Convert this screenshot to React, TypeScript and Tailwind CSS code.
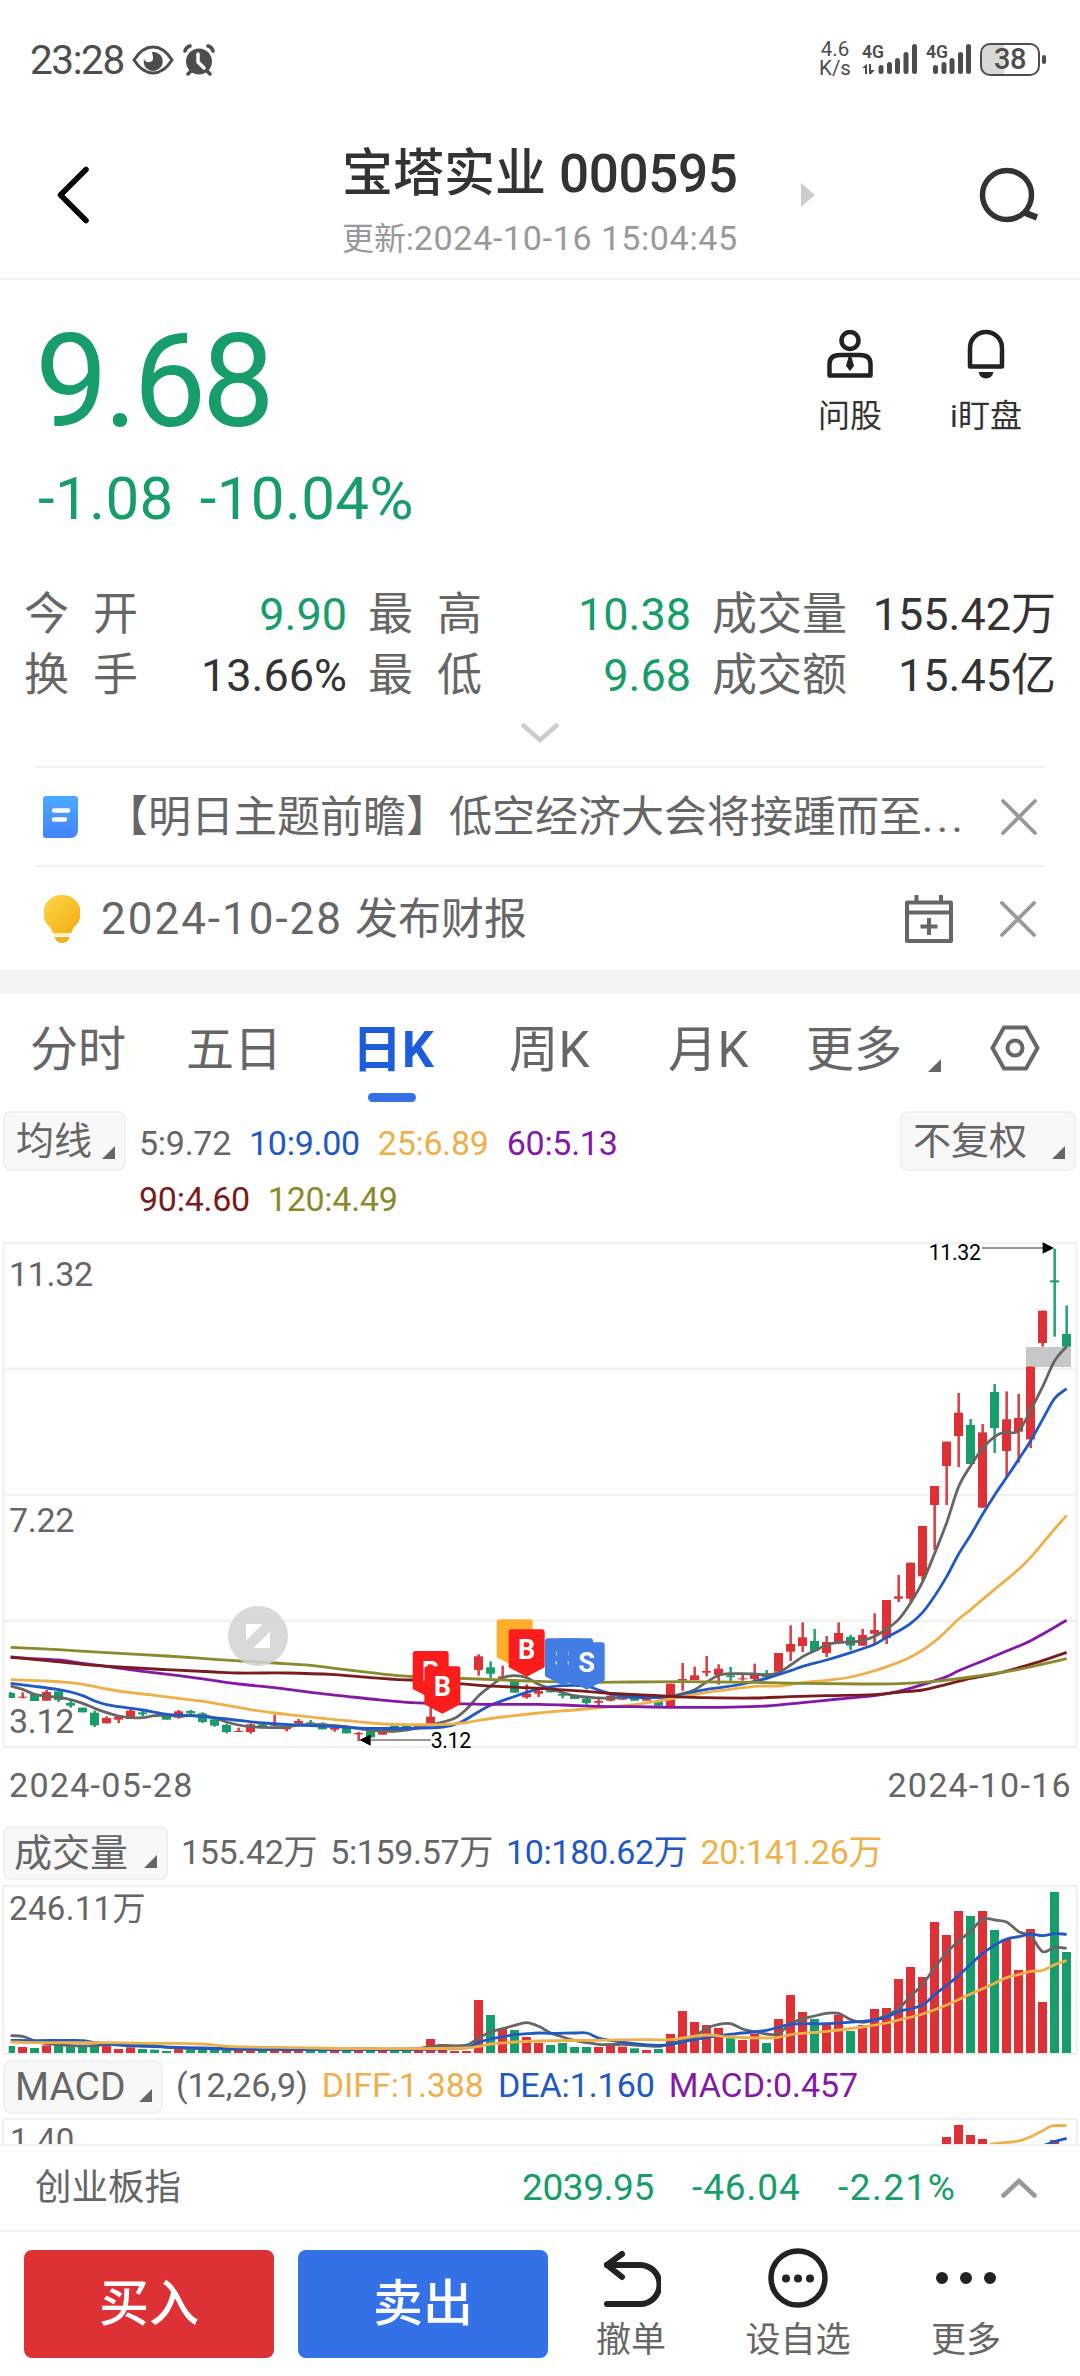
import type { ReactNode } from 'react';

const RED = '#dd3135';
const GREEN = '#169d6a';
const GRAY = '#666666';
const BLUE = '#2058c4';
const ORANGE = '#eeb04a';
const PURPLE = '#8419a8';
const MAROON = '#7a1c1c';
const OLIVE = '#888a2c';

type Point = [number, number];
/* direction, body top, body bottom, wick top, wick bottom */
type Candle = ['u' | 'd', number, number, number, number];

/* Chart drawings use a grid of three units per pixel. */
const centerX = (i: number) => 32 + 36 * i;

const candles: Candle[] = [
  ['d', 1389, 1404, 1386, 1404], ['u', 1400, 1403, 1387, 1405], ['d', 1393, 1413, 1393, 1413], ['u', 1386, 1412, 1380, 1412],
  ['d', 1384, 1410, 1384, 1416], ['d', 1419, 1427, 1412, 1433], ['d', 1433, 1447, 1433, 1447], ['d', 1448, 1486, 1442, 1491],
  ['u', 1464, 1480, 1459, 1480], ['u', 1460, 1469, 1460, 1479], ['u', 1442, 1467, 1438, 1467], ['d', 1447, 1453, 1442, 1458],
  ['u', 1456, 1459, 1456, 1459], ['d', 1458, 1469, 1458, 1469], ['u', 1444, 1463, 1440, 1466], ['d', 1443, 1450, 1440, 1453],
  ['d', 1450, 1476, 1447, 1479], ['d', 1468, 1487, 1466, 1490], ['d', 1485, 1506, 1481, 1510], ['u', 1503, 1506, 1493, 1506],
  ['u', 1483, 1506, 1480, 1511], ['d', 1483, 1488, 1478, 1490], ['u', 1480, 1487, 1454, 1490], ['u', 1493, 1498, 1490, 1504],
  ['u', 1473, 1480, 1467, 1482], ['d', 1477, 1481, 1470, 1484], ['d', 1480, 1498, 1477, 1498], ['u', 1494, 1499, 1490, 1505],
  ['d', 1493, 1510, 1493, 1510], ['u', 1509, 1513, 1506, 1533], ['d', 1502, 1522, 1500, 1524], ['u', 1503, 1514, 1503, 1514],
  ['d', 1487, 1493, 1483, 1493], ['d', 1485, 1493, 1482, 1493], ['u', 1486, 1493, 1486, 1493], ['u', 1460, 1480, 1430, 1480],
  ['u', 1400, 1430, 1400, 1440], ['u', 1360, 1390, 1360, 1390], ['u', 1343, 1347, 1343, 1347], ['u', 1279, 1320, 1273, 1337],
  ['d', 1312, 1331, 1294, 1344], ['u', 1339, 1345, 1307, 1345], ['d', 1353, 1388, 1353, 1388], ['u', 1391, 1402, 1363, 1406],
  ['u', 1383, 1391, 1370, 1401], ['d', 1381, 1387, 1381, 1387], ['d', 1392, 1397, 1387, 1405], ['d', 1394, 1407, 1394, 1407],
  ['d', 1406, 1419, 1400, 1424], ['u', 1413, 1418, 1408, 1426], ['u', 1397, 1412, 1393, 1414], ['u', 1403, 1409, 1403, 1409],
  ['d', 1404, 1412, 1404, 1412], ['u', 1405, 1412, 1405, 1412], ['d', 1415, 1427, 1415, 1427], ['u', 1361, 1430, 1361, 1430],
  ['u', 1347, 1351, 1299, 1382], ['u', 1336, 1350, 1310, 1350], ['u', 1323, 1328, 1278, 1339], ['u', 1316, 1335, 1303, 1364],
  ['d', 1336, 1341, 1311, 1353], ['u', 1345, 1348, 1330, 1352], ['u', 1331, 1347, 1301, 1350], ['d', 1330, 1342, 1320, 1345],
  ['u', 1269, 1325, 1269, 1325], ['u', 1242, 1265, 1186, 1293], ['u', 1222, 1248, 1177, 1266], ['d', 1233, 1263, 1197, 1263],
  ['u', 1236, 1269, 1218, 1281], ['u', 1209, 1240, 1177, 1242], ['d', 1221, 1247, 1214, 1261], ['u', 1215, 1247, 1197, 1247],
  ['u', 1200, 1211, 1150, 1245], ['u', 1110, 1224, 1110, 1242], ['u', 1099, 1106, 1035, 1116], ['u', 998, 1106, 998, 1115],
  ['u', 888, 1039, 888, 1052], ['u', 768, 825, 768, 960], ['u', 635, 708, 635, 825], ['u', 548, 618, 489, 711],
  ['d', 585, 702, 567, 702], ['u', 607, 833, 582, 833], ['d', 486, 594, 462, 669], ['u', 568, 663, 484, 741],
  ['u', 564, 605, 492, 698], ['u', 410, 628, 410, 654], ['u', 242, 339, 242, 350], ['d', 151, 157, 56, 320],
  ['d', 312, 350, 226, 350],
];

const ma5: Point[] = [
  [32, 1368], [68, 1378], [104, 1393], [140, 1398], [176, 1402], [212, 1409], [248, 1420], [284, 1435], [320, 1448], [356, 1458],
  [392, 1463], [428, 1463], [464, 1457], [500, 1455], [536, 1458], [572, 1457], [608, 1458], [644, 1464], [680, 1476], [716, 1485],
  [752, 1490], [788, 1492], [824, 1493], [860, 1491], [896, 1485], [950, 1484], [1040, 1490], [1112, 1501], [1184, 1504], [1220, 1500],
  [1256, 1493], [1292, 1484], [1328, 1476], [1364, 1465], [1400, 1437], [1436, 1397], [1472, 1368], [1508, 1343], [1544, 1337],
  [1580, 1343], [1616, 1363], [1652, 1377], [1688, 1388], [1724, 1398], [1760, 1401], [1796, 1404], [1832, 1404], [1868, 1403],
  [1904, 1401], [1976, 1402], [2012, 1399], [2048, 1391], [2084, 1379], [2120, 1356], [2160, 1335], [2210, 1331], [2264, 1332],
  [2300, 1335], [2336, 1328], [2372, 1305], [2408, 1280], [2444, 1262], [2480, 1245], [2516, 1237], [2552, 1236], [2588, 1232],
  [2624, 1219], [2660, 1197], [2696, 1168], [2732, 1118], [2768, 1055], [2804, 970], [2840, 878], [2876, 770], [2912, 707],
  [2948, 655], [2984, 620], [3012, 607], [3056, 603], [3092, 540], [3128, 470], [3164, 392], [3200, 349],
];
const ma10: Point[] = [
  [32, 1360], [104, 1369], [176, 1379], [212, 1386], [248, 1397], [284, 1413], [320, 1424], [356, 1430], [428, 1440], [500, 1453],
  [572, 1457], [680, 1467], [788, 1479], [896, 1485], [1004, 1490], [1112, 1495], [1220, 1495], [1328, 1491], [1380, 1478],
  [1436, 1445], [1472, 1426], [1508, 1412], [1580, 1387], [1616, 1377], [1652, 1371], [1688, 1367], [1760, 1368], [1796, 1380],
  [1832, 1392], [1868, 1398], [1940, 1403], [2012, 1400], [2048, 1396], [2084, 1385], [2120, 1378], [2160, 1373], [2228, 1362],
  [2300, 1345], [2372, 1322], [2408, 1309], [2480, 1290], [2552, 1268], [2624, 1243], [2660, 1222], [2696, 1203], [2732, 1180],
  [2768, 1147], [2804, 1098], [2840, 1040], [2876, 972], [2912, 915], [2948, 853], [2984, 795], [3020, 742], [3056, 688],
  [3092, 632], [3128, 568], [3164, 505], [3200, 476],
];
const ma25: Point[] = [
  [32, 1349], [140, 1353], [212, 1358], [250, 1363], [320, 1377], [392, 1388], [464, 1396], [536, 1405], [608, 1414], [680, 1426],
  [752, 1439], [824, 1449], [896, 1457], [968, 1465], [1040, 1472], [1112, 1479], [1180, 1483], [1300, 1484], [1380, 1480],
  [1436, 1471], [1508, 1461], [1616, 1449], [1724, 1440], [1832, 1430], [1904, 1424], [1976, 1413], [2048, 1400], [2120, 1387],
  [2160, 1382], [2264, 1369], [2336, 1368], [2408, 1358], [2480, 1351], [2552, 1341], [2624, 1322], [2696, 1297], [2732, 1281],
  [2768, 1260], [2804, 1234], [2840, 1202], [2876, 1167], [2912, 1139], [2948, 1108], [2984, 1078], [3020, 1048], [3056, 1018],
  [3092, 982], [3128, 940], [3164, 897], [3200, 856],
];
const ma60: Point[] = [
  [32, 1281], [100, 1286], [176, 1290], [248, 1300], [356, 1314], [428, 1324], [536, 1337], [644, 1352], [716, 1362], [824, 1373],
  [932, 1387], [1040, 1399], [1112, 1407], [1220, 1417], [1328, 1420], [1472, 1423], [1616, 1423], [1688, 1425], [1796, 1429],
  [1904, 1430], [2012, 1432], [2120, 1432], [2160, 1432], [2300, 1428], [2408, 1418], [2516, 1407], [2624, 1397], [2696, 1384],
  [2768, 1364], [2840, 1340], [2876, 1322], [2948, 1293], [3020, 1263], [3092, 1232], [3200, 1171],
];
const ma90: Point[] = [
  [32, 1282], [140, 1292], [248, 1303], [356, 1311], [500, 1319], [644, 1326], [716, 1329], [860, 1329], [1004, 1334], [1112, 1343],
  [1184, 1348], [1292, 1353], [1436, 1366], [1580, 1373], [1724, 1382], [1868, 1392], [2012, 1399], [2120, 1403], [2264, 1404],
  [2372, 1400], [2480, 1397], [2624, 1394], [2696, 1387], [2768, 1380], [2840, 1363], [2912, 1345], [2984, 1332], [3056, 1313],
  [3128, 1292], [3200, 1267],
];
const ma120: Point[] = [
  [32, 1252], [176, 1259], [320, 1268], [500, 1278], [644, 1288], [752, 1295], [824, 1299], [932, 1306], [1004, 1315], [1112, 1328],
  [1184, 1336], [1292, 1342], [1436, 1347], [1580, 1353], [1724, 1357], [1904, 1356], [2048, 1355], [2160, 1356], [2264, 1357],
  [2408, 1360], [2588, 1362], [2696, 1361], [2804, 1354], [2912, 1341], [3020, 1325], [3092, 1311], [3200, 1286],
];

/* Bar heights, in the same order as the candles. */
const volumes = [
  21, 18, 15, 23, 21, 21, 20, 21, 21, 12, 17, 12, 10, 6, 14, 12, 12, 11, 12, 10, 9, 9, 9, 9, 9, 6, 9, 8, 8, 8, 6, 10, 7, 7, 9, 42,
  27, 6, 6, 159, 114, 73, 69, 48, 30, 24, 30, 18, 18, 18, 29, 19, 14, 9, 12, 57, 126, 93, 84, 75, 45, 39, 58, 30, 102, 174, 123, 102,
  87, 115, 66, 84, 132, 135, 222, 258, 228, 393, 354, 426, 411, 426, 369, 342, 249, 372, 153, 483, 303,
];
const greenVolumes = new Set([0, 2, 4, 5, 6, 7, 11, 12, 13, 15, 16, 17, 18, 21, 25, 26, 28, 30, 32, 33, 40, 42, 45, 46, 47, 48, 52, 54, 60, 63, 67, 70, 80, 82, 87, 88]);

/* Index, height above the base line. */
const volumeMa5: Point[] = [
  [0, 52], [1, 50], [2, 36], [3, 28], [5, 22], [7, 22], [9, 28], [11, 27], [13, 17], [16, 13], [20, 11], [25, 10], [28, 12], [34, 13],
  [35, 20], [36, 22], [38, 24], [39, 45], [40, 63], [41, 73], [42, 83], [43, 91], [44, 80], [45, 60], [46, 48], [47, 38], [48, 31],
  [49, 26], [50, 25], [51, 26], [52, 24], [54, 20], [55, 28], [57, 50], [58, 74], [59, 86], [60, 88], [61, 72], [62, 64], [63, 57],
  [64, 58], [65, 88], [66, 103], [67, 111], [68, 119], [69, 119], [70, 100], [71, 92], [72, 99], [73, 114], [74, 133], [75, 171],
  [76, 206], [77, 256], [78, 301], [79, 336], [80, 365], [81, 402], [82, 399], [83, 393], [84, 364], [85, 351], [86, 304], [87, 317], [88, 314],
];
const volumeMa10: Point[] = [
  [0, 38], [2, 37], [5, 38], [6, 37], [7, 31], [9, 24], [12, 19], [16, 15], [20, 11], [28, 10], [34, 11], [38, 16], [39, 32], [40, 42],
  [41, 49], [42, 55], [43, 58], [44, 60], [45, 59], [47, 60], [48, 60], [49, 45], [50, 38], [52, 28], [54, 23], [55, 26], [57, 40],
  [59, 52], [61, 60], [63, 68], [65, 86], [68, 88], [71, 95], [72, 99], [73, 108], [74, 124], [76, 144], [77, 175], [78, 203],
  [79, 232], [80, 266], [81, 299], [82, 323], [83, 342], [84, 349], [85, 357], [86, 352], [87, 358], [88, 356],
];
const volumeMa20: Point[] = [
  [0, 33], [2, 31], [8, 31], [12, 29], [16, 27], [18, 20], [24, 16], [30, 13], [38, 15], [39, 20], [40, 27], [42, 33], [44, 36],
  [48, 38], [52, 40], [55, 40], [56, 45], [58, 54], [60, 48], [63, 45], [64, 47], [65, 55], [68, 65], [71, 78], [73, 90], [74, 99],
  [76, 117], [78, 144], [80, 177], [82, 209], [83, 226], [84, 235], [85, 245], [86, 248], [87, 265], [88, 277],
];

function curve(points: Point[]) {
  let d = `M${points[0][0]} ${points[0][1]}`;
  for (let i = 0; i < points.length - 1; i++) {
    const p0 = points[Math.max(i - 1, 0)];
    const p1 = points[i];
    const p2 = points[i + 1];
    const p3 = points[Math.min(i + 2, points.length - 1)];
    const third = (p2[0] - p1[0]) / 3;
    const s1 = i === 0 ? (p2[1] - p1[1]) / (p2[0] - p1[0]) : (p2[1] - p0[1]) / (p2[0] - p0[0]);
    const s2 = p3 === p2 ? (p2[1] - p1[1]) / (p2[0] - p1[0]) : (p3[1] - p1[1]) / (p3[0] - p1[0]);
    d += `C${p1[0] + third} ${p1[1] + s1 * third} ${p2[0] - third} ${p2[1] - s2 * third} ${p2[0]} ${p2[1]}`;
  }
  return d;
}

function Curve({ points, color }: { points: Point[]; color: string }) {
  return <path d={curve(points)} fill="none" stroke={color} strokeWidth={8.4} />;
}

function Badge({ x, y, color, label }: { x: number; y: number; color: string; label?: string }) {
  return (
    <g transform={`translate(${x} ${y})`}>
      <path d="M8 0H100Q108 0 108 8V114L54 142L0 114V8Q0 0 8 0Z" fill={color} />
      {label && (
        <text x="54" y="89" textAnchor="middle" fill="#fff" fontSize="81" fontWeight="700">
          {label}
        </text>
      )}
    </g>
  );
}

function PriceChart() {
  return (
    <div className="relative h-[517px] w-full">
      <svg viewBox="0 0 3240 1551" className="block h-[517px] w-[1080px] overflow-visible" fontFamily="Roboto, sans-serif">
        <path
          d="M10 39H3230M10 416H3230M10 795H3230M10 1172H3230M10 1551H3230M11 39V1551M3229 39V1551"
          fill="none"
          stroke="#f0f0f0"
          strokeWidth="6"
        />
        <rect x="3078" y="351" width="135" height="60" fill="#c8c8c8" />
        {candles.map(([dir, top, bottom, high, low], i) => {
          const x = centerX(i);
          const left = Math.max(x - 14, 26);
          return (
            <g key={i} fill={dir === 'u' ? RED : GREEN}>
              <rect x={x - 4} y={high} width="8" height={low - high} opacity="0.9" />
              <rect x={left} y={top} width={x + 13 - left} height={bottom - top} />
            </g>
          );
        })}
        <Curve points={ma5} color={GRAY} />
        <Curve points={ma10} color={BLUE} />
        <Curve points={ma25} color={ORANGE} />
        <Curve points={ma60} color={PURPLE} />
        <Curve points={ma90} color={MAROON} />
        <Curve points={ma120} color={OLIVE} />
        <path d="M2946 54H3130M1110 1530H1293" stroke="#777" strokeWidth="5" />
        <path d="M3128 37L3162 54L3128 71ZM1112 1513L1078 1530L1112 1547Z" fill="#000" />
        <text x="2786" y="90" fontSize="64" letterSpacing="-1">11.32</text>
        <text x="1292" y="1555" fontSize="64" letterSpacing="-1">3.12</text>
        <Badge x={1238} y={1263} color="#fb1c1c" label="B" />
        <Badge x={1273} y={1309} color="#fb1c1c" label="B" />
        <Badge x={1490} y={1168} color="#feae2b" />
        <Badge x={1526} y={1198} color="#fb1c1c" label="B" />
        <Badge x={1635} y={1225} color="#427de4" label="S" />
        <Badge x={1671} y={1225} color="#427de4" label="S" />
        <Badge x={1706} y={1237} color="#427de4" label="S" />
        <circle cx="774" cy="1218" r="90" fill="#d2d2d2" opacity="0.85" />
        <path d="M738 1182H788L738 1232ZM810 1206V1254H760Z" fill="#fff" />
      </svg>
      <div className="absolute left-[9px] top-0 h-full text-[34px] leading-[34px] tracking-[-0.01em] text-[#666]">
        <div className="pt-[27px]">11.32</div>
        <div className="pt-[212px]">7.22</div>
        <div className="pt-[167px]">3.12</div>
      </div>
    </div>
  );
}

function VolumeChart() {
  const place = (points: Point[]): Point[] => points.map(([i, h]) => [centerX(i), 504 - h]);
  return (
    <div className="relative h-[170px]">
      <svg viewBox="0 0 3240 510" className="block h-[170px] w-[1080px] overflow-visible">
        <path d="M10 3H3230V507H10Z" fill="none" stroke="#f0f0f0" strokeWidth="6" />
        {volumes.map((h, i) => {
          const left = Math.max(centerX(i) - 14, 26);
          return (
            <rect key={i} x={left} y={504 - h} width={centerX(i) + 13 - left} height={h} fill={greenVolumes.has(i) ? GREEN : RED} />
          );
        })}
        <Curve points={place(volumeMa5)} color={GRAY} />
        <Curve points={place(volumeMa10)} color={BLUE} />
        <Curve points={place(volumeMa20)} color={ORANGE} />
      </svg>
      <div className="absolute left-[9px] top-[7px] text-[33px] leading-[34px] tracking-[0.01em] text-[#666]">246.11万</div>
    </div>
  );
}

function MacdChart() {
  return (
    <div className="relative h-[26px] overflow-hidden">
      <svg viewBox="0 0 3240 78" className="block h-[26px] w-[1080px]">
        <path d="M10 78V3H3230V78" fill="none" stroke="#f0f0f0" strokeWidth="6" />
        <path d="M2826 57h27v40h-27zM2862 21h27v70h-27zM2898 51h27v40h-27zM2934 63h27v40h-27zM3150 66h27v40h-27z" fill={RED} />
        <Curve color={ORANGE} points={[[2970, 79], [3020, 73], [3056, 69], [3092, 56], [3128, 38], [3155, 24], [3200, 23]]} />
        <Curve color={BLUE} points={[[3130, 83], [3164, 71], [3200, 61]]} />
      </svg>
      <div className="absolute left-[10px] top-[6px] text-[33px] leading-[34px] text-[#666]">1.40</div>
    </div>
  );
}

function Corner({ className }: { className: string }) {
  return (
    <svg viewBox="0 0 13 13" className={`size-[13px] shrink-0 ${className}`}>
      <path d="M13 0V13H0Z" fill="#666" />
    </svg>
  );
}

function Chip({ label, className, cornerClass }: { label: string; className: string; cornerClass: string }) {
  return (
    <div className={`flex items-center justify-between rounded-lg border-2 border-[#f1f1f1] bg-[#f8f8f8] pr-[9px] text-[#666] ${className}`}>
      <span>{label}</span>
      <Corner className={cornerClass} />
    </div>
  );
}

function Close() {
  return (
    <svg viewBox="0 0 36 36" className="size-9" fill="none" stroke="#999" strokeWidth="3.8" strokeLinecap="round">
      <path d="M2 2L34 34M34 2L2 34" />
    </svg>
  );
}

function Signal({ data }: { data?: boolean }) {
  return (
    <svg viewBox="0 0 56 34" className="h-[34px] w-[56px] overflow-visible" fill="#4d4d4d" fontFamily="Roboto, sans-serif">
      <text x="0" y="14" fontSize="19" fontWeight="600" textLength="22" lengthAdjust="spacingAndGlyphs">4G</text>
      {data ? (
        <>
          <path d="M5 20V30H3V24H0ZM7 20h2V26h4L9 30H7Z" />
          <rect x="16.500" y="21" width="5" height="9" rx="2.500" />
        </>
      ) : (
        <rect x="7" y="21" width="5" height="9" rx="2.500" />
      )}
      {(data ? [25, 33, 41.5, 50] : [15.5, 23.5, 32, 40]).map((x, i) => (
        <rect key={x} x={x} y={[18, 14, 8, 0][i]} width="5" height={[12, 16, 22, 30][i]} rx="2.500" />
      ))}
    </svg>
  );
}

function StatusBar() {
  return (
    <div className="flex h-[119px] items-center pl-[30px] text-[#4d4d4d]">
      <div className="w-[100px] text-[40.5px] leading-[50px] tracking-[-0.035em]">23:28</div>
      <svg viewBox="0 0 42 30" className="ml-[2px] h-[30px] w-[42px]">
        <path d="M2 15C9 4 15 2 21 2S33 4 40 15C33 26 27 28 21 28S9 26 2 15Z" fill="none" stroke="#4d4d4d" strokeWidth="3" />
        <path d="M20 7A9.500 9.500 0 1 1 12 14C14 19 22 18 21 12C21 10 20 9 20 7Z" fill="#4d4d4d" />
      </svg>
      <svg viewBox="0 0 32 32" className="ml-[9px] size-8">
        <circle cx="16" cy="17.500" r="13" fill="#4d4d4d" />
        <path d="M2 7Q3 3 7 2M25 2Q29 3 30 7M5 30L9 26M27 30L23 26" stroke="#4d4d4d" strokeWidth="3.500" strokeLinecap="round" fill="none" />
        <path d="M15 10V18L21 24" stroke="#fff" strokeWidth="3.500" strokeLinecap="round" strokeLinejoin="round" fill="none" />
      </svg>
      <div className="ml-[603px] w-[34px] pb-px text-center text-[20.5px] leading-[19px]">
        <div>4.6</div>
        <div>K/s</div>
      </div>
      <div className="ml-[10px] flex items-center gap-[8px] pt-[3px]">
        <Signal data />
        <Signal />
      </div>
      <div className="-ml-[2px] flex items-center">
        <div className="flex h-[33px] w-[60px] items-center justify-center rounded-[10px] border-[2.500px] border-[#4d4d4d] bg-linear-to-r from-[#d8d8d8] from-40% to-white to-40% text-[29px] font-medium leading-[29px] tracking-[-0.02em]">
          38
        </div>
        <div className="ml-[2px] h-[9px] w-[4px] rounded-full bg-[#4d4d4d]" />
      </div>
    </div>
  );
}

function Header() {
  return (
    <header className="flex h-[161px] items-start border-b-2 border-[#f0f0f0]">
      <svg viewBox="0 0 34 58" className="ml-[56px] mt-[47px] h-[58px] w-[34px]" fill="none" stroke="#000" strokeWidth="5.500" strokeLinecap="round" strokeLinejoin="round">
        <path d="M30 3.500L4.500 29L30 54.500" />
      </svg>
      <div className="ml-[252px] mt-[23px] w-[401px]">
        <div className="flex gap-[13px] text-[51px] font-medium leading-[64px] text-[#333]">
          <span>宝塔实业</span>
          <span className="text-[53px] tracking-[-0.007em]">000595</span>
        </div>
        <div className="whitespace-nowrap text-[32px] leading-[64px] text-[#999]">
          更新:<span className="text-[34px] tracking-[0.02em]">2024-10-16 15:04:45</span>
        </div>
      </div>
      <svg viewBox="0 0 14 24" className="ml-[58px] mt-[64px] h-[24px] w-[14px]">
        <path d="M0 0L14 12L0 24Z" fill="#ccc" />
      </svg>
      <svg viewBox="0 0 60 56" className="ml-[164px] mt-[48px] h-[56px] w-[60px]" fill="none" stroke="#333" strokeWidth="5.500">
        <circle cx="28" cy="28" r="24.500" />
        <path d="M44 45L58 50.500" strokeWidth="6.500" />
      </svg>
    </header>
  );
}

function QuickAction({ label, children }: { label: string; children: ReactNode }) {
  return (
    <div className="flex w-[136px] flex-col items-center">
      <div className="flex h-[52px] items-center">{children}</div>
      <div className="mt-[18px] whitespace-nowrap text-[32px] leading-[36px] text-[#333]">{label}</div>
    </div>
  );
}

function Quote() {
  return (
    <section className="h-[486px]">
      <div className="flex h-[256px] items-start justify-between">
        <div className="whitespace-nowrap pl-[35px] pt-[32px] text-[#169d6a]">
          <div className="text-[130px] leading-[140px] tracking-[-0.035em]">9.68</div>
          <div className="mt-[12px] flex gap-[26px] pl-[3px] text-[60px] leading-[70px] tracking-[0.007em]">
            <span>-1.08</span>
            <span>-10.04%</span>
          </div>
        </div>
        <div className="flex pr-[26px] pt-[48px]">
          <QuickAction label="问股">
            <svg viewBox="0 0 46 48" className="h-[48px] w-[46px]" fill="none" stroke="#222" strokeWidth="4.500" strokeLinejoin="round">
              <circle cx="23" cy="10.500" r="8.500" />
              <path d="M2.500 45.500V34Q2.500 25 13 25H33Q43.500 25 43.500 34V45.500Z" />
              <path d="M21.500 27H24.500L27 36L23 41L19 36Z" fill="#222" stroke="none" />
            </svg>
          </QuickAction>
          <QuickAction label="i盯盘">
            <svg viewBox="0 0 38 50" className="h-[50px] w-[38px]" fill="none" stroke="#222" strokeWidth="4.500" strokeLinejoin="round">
              <path d="M3 37.500V19A16 16 0 0 1 35 19V37.500Z" />
              <path d="M11.500 43H26.500Q25 49.500 19 49.500T11.500 43Z" fill="#222" stroke="none" />
            </svg>
          </QuickAction>
        </div>
      </div>
      <div className="mt-[48px] grid grid-cols-[323px_323px_344px] gap-x-[21px] pl-[24px] text-[45px] leading-[61px]">
        <Stat label={<Spaced a="今" b="开" />} value="9.90" green />
        <Stat label={<Spaced a="最" b="高" />} value="10.38" green />
        <Stat label="成交量" value="155.42万" />
        <Stat label={<Spaced a="换" b="手" />} value="13.66%" />
        <Stat label={<Spaced a="最" b="低" />} value="9.68" green />
        <Stat label="成交额" value="15.45亿" />
      </div>
      <svg viewBox="0 0 38 20" className="mx-auto mt-[17px] h-[20px] w-[38px]" fill="none" stroke="#ccc" strokeWidth="4.500" strokeLinecap="round">
        <path d="M2.500 2.500L19 17L35.500 2.500" />
      </svg>
    </section>
  );
}

function Spaced({ a, b }: { a: string; b: string }) {
  return (
    <span className="flex gap-[24px]">
      <span>{a}</span>
      <span>{b}</span>
    </span>
  );
}

function Stat({ label, value, green }: { label: ReactNode; value: string; green?: boolean }) {
  return (
    <div className="flex justify-between whitespace-nowrap">
      <span className="text-[#666]">{label}</span>
      <span className={green ? 'text-[#169d6a]' : 'text-[#333]'}>{value}</span>
    </div>
  );
}

function Notices() {
  return (
    <section className="mx-[35px] h-[204px] text-[43px] text-[#666]">
      <div className="flex h-[99px] items-center border-t-2 border-[#f0f0f0]">
        <svg viewBox="0 0 35 42" className="ml-[8px] h-[42px] w-[35px]">
          <defs>
            <linearGradient id="news" x1="0" y1="0" x2="0" y2="1">
              <stop offset="0" stopColor="#4aabff" />
              <stop offset="1" stopColor="#4382fb" />
            </linearGradient>
          </defs>
          <path d="M3 0H32Q35 0 35 3V33Q35 42 27 42H3Q0 42 0 39V3Q0 0 3 0Z" fill="url(#news)" />
          <path d="M11 14.500H25M11 23.500H22" stroke="#fff" strokeWidth="4.500" strokeLinecap="round" />
        </svg>
        <span className="ml-[27px] w-[870px] overflow-hidden whitespace-nowrap leading-[60px]">
          【明日主题前瞻】低空经济大会将接踵而至<span className="tracking-[0.08em]">...</span>
        </span>
        <span className="ml-[26px]">
          <Close />
        </span>
      </div>
      <div className="flex h-[105px] items-center border-t-2 border-[#f0f0f0]">
        <svg viewBox="0 0 36 48" className="ml-[9px] h-[48px] w-[36px]">
          <defs>
            <linearGradient id="bulb" x1="0" y1="0" x2="1" y2="1">
              <stop offset="0" stopColor="#ffd84a" />
              <stop offset="1" stopColor="#f3ab12" />
            </linearGradient>
          </defs>
          <path d="M18 0A18 18 0 0 1 30 32L27 38H9L6 32A18 18 0 0 1 18 0Z" fill="url(#bulb)" />
          <path d="M10 38H26V41H10Z" fill="#fff0c0" />
          <path d="M10.500 42H25.500Q24 48 18 48T10.500 42Z" fill="#f0b020" />
        </svg>
        <span className="ml-[21px] flex w-[770px] gap-[12px] whitespace-nowrap leading-[60px]">
          <span className="text-[44px] tracking-[0.045em]">2024-10-28</span>
          <span>发布财报</span>
        </span>
        <svg viewBox="0 0 50 48" className="ml-[33px] h-[48px] w-[50px]" fill="none" stroke="#666" strokeWidth="4" strokeLinejoin="round">
          <path d="M3 7.500H47V46H3ZM3 17.500H47M12.500 0V8M37 0V8M25 23V40M16.500 31.500H33.500" />
        </svg>
        <span className="ml-[46px]">
          <Close />
        </span>
      </div>
    </section>
  );
}

function Tabs() {
  return (
    <nav className="flex h-[117px] items-start whitespace-nowrap pl-[30px] pt-[26px] text-[48px] leading-[60px] text-[#666]">
      <span className="w-[156px]">分时</span>
      <span className="w-[166px]">五日</span>
      <span className="flex w-[157px] flex-col text-[50px] font-bold text-[#1d5cdb]">
        日K
        <span className="ml-[16px] mt-[13px] h-[9px] w-[48px] rounded-full bg-[#3470e6]" />
      </span>
      <span className="w-[159px] text-[49.5px]">周K</span>
      <span className="w-[138px] text-[49.5px]">月K</span>
      <span className="w-[98px]">更多</span>
      <Corner className="ml-[24px] mt-[39px]" />
      <svg viewBox="0 0 50 46" className="ml-[49px] mt-[5px] h-[46px] w-[50px]" fill="none" stroke="#666" strokeWidth="4" strokeLinejoin="round">
        <path d="M14 2.500H36L47.500 23L36 43.500H14L2.500 23Z" />
        <circle cx="25" cy="23" r="7.500" />
      </svg>
    </nav>
  );
}

function Averages() {
  return (
    <div className="flex h-[119px] items-start pl-[3px] pr-[4px]">
      <Chip label="均线" className="h-[60px] w-[123px] pl-[11px] text-[38px]" cornerClass="mt-[22px]" />
      <div className="ml-[13px] w-[600px] text-[34px] leading-[56px] tracking-[-0.008em]">
        <div className="mt-[4px] flex gap-[18px]">
          <span className="text-[#666]">5:9.72</span>
          <span className="text-[#2058c4]">10:9.00</span>
          <span className="text-[#eeb04a]">25:6.89</span>
          <span className="text-[#8419a8]">60:5.13</span>
        </div>
        <div className="flex gap-[18px]">
          <span className="text-[#7a1c1c]">90:4.60</span>
          <span className="text-[#888a2c]">120:4.49</span>
        </div>
      </div>
      <Chip label="不复权" className="ml-auto h-[60px] w-[176px] pl-[11px] text-[38px]" cornerClass="mt-[22px]" />
    </div>
  );
}

function BottomBar() {
  return (
    <footer className="flex h-[146px] items-start border-t-2 border-[#f0f0f0] pl-[24px] pt-[18px] text-[#666]">
      <button className="h-[108px] w-[250px] rounded-lg bg-[#dd3135] text-[50px] font-medium text-white">买入</button>
      <button className="ml-[24px] h-[108px] w-[250px] rounded-lg bg-[#3470e6] text-[50px] font-medium text-white">卖出</button>
      <div className="flex whitespace-nowrap text-[35px] leading-[40px]">
        <div className="flex w-[166px] flex-col items-center">
          <svg viewBox="0 0 60 60" className="size-[60px]" fill="none" stroke="#222" strokeWidth="6" strokeLinecap="round" strokeLinejoin="round">
            <path d="M21 4L6 15L21 27" />
            <path d="M6 15H39A19.500 19.500 0 0 1 39 54H6" />
          </svg>
          <span className="mt-[11px]">撤单</span>
        </div>
        <div className="flex w-[168px] flex-col items-center">
          <svg viewBox="0 0 60 60" className="-mt-[2px] size-[60px]">
            <circle cx="30" cy="30" r="27" fill="none" stroke="#222" strokeWidth="5.500" />
            <path d="M18 30.500h.01M30 30.500h.01M42 30.500h.01" stroke="#222" strokeWidth="8" strokeLinecap="round" />
          </svg>
          <span className="mt-[13px]">设自选</span>
        </div>
        <div className="flex w-[168px] flex-col items-center">
          <svg viewBox="0 0 60 60" className="size-[60px]">
            <path d="M6 28h.01M30 28h.01M54 28h.01" stroke="#222" strokeWidth="12" strokeLinecap="round" />
          </svg>
          <span className="mt-[11px]">更多</span>
        </div>
      </div>
    </footer>
  );
}

export default function App() {
  return (
    <div className="flex h-[2376px] w-[1080px] flex-col overflow-hidden bg-[#fefefe] font-['Roboto','Noto_Sans_CJK_SC',sans-serif]">
      <StatusBar />
      <Header />
      <Quote />
      <Notices />
      <div className="h-[24px] bg-[#f4f4f4]" />
      <div className="h-[1150px] overflow-hidden">
        <Tabs />
        <Averages />
        <PriceChart />
        <div className="flex h-[79px] justify-between px-[9px] text-[34px] leading-[77px] tracking-[0.038em] text-[#666]">
          <span>2024-05-28</span>
          <span className="-mr-px">2024-10-16</span>
        </div>
        <div className="flex h-[59px] items-start pl-[3px]">
          <Chip label="成交量" className="h-[54px] w-[165px] pl-[9px] text-[38px]" cornerClass="mt-[16px]" />
          <div className="ml-[13px] flex gap-[13px] whitespace-nowrap text-[34px] leading-[52px] tracking-[-0.01em]">
            <span className="text-[#666]">155.42万</span>
            <span className="text-[#666]">5:159.57万</span>
            <span className="text-[#2058c4]">10:180.62万</span>
            <span className="text-[#eeb04a]">20:141.26万</span>
          </div>
        </div>
        <VolumeChart />
        <div className="flex h-[63px] items-start pl-[3px] pt-[5px]">
          <Chip label="MACD" className="h-[54px] w-[160px] pl-[10px] text-[39px]" cornerClass="mt-[16px]" />
          <div className="ml-[13px] flex gap-[14px] whitespace-nowrap text-[34px] leading-[50px] tracking-[-0.002em]">
            <span className="text-[#666]">(12,26,9)</span>
            <span className="text-[#eeb04a]">DIFF:1.388</span>
            <span className="text-[#2058c4]">DEA:1.160</span>
            <span className="text-[#8419a8]">MACD:0.457</span>
          </div>
        </div>
        <MacdChart />
      </div>
      <div className="flex h-[86px] items-center border-t-2 border-[#f0f0f0] pl-[35px] pr-[43px] text-[37px] leading-[50px]">
        <span className="flex-1 text-[36.500px] text-[#666]">创业板指</span>
        <span className="w-[170px] tracking-[-0.01em] text-[#169d6a]">2039.95</span>
        <span className="w-[146px] tracking-[0.025em] text-[#169d6a]">-46.04</span>
        <span className="w-[163px] tracking-[0.04em] text-[#169d6a]">-2.21%</span>
        <svg viewBox="0 0 36 20" className="h-[20px] w-[36px]" fill="none" stroke="#999" strokeWidth="4.500" strokeLinecap="round">
          <path d="M2.500 17.500L18 3L33.500 17.500" />
        </svg>
      </div>
      <BottomBar />
    </div>
  );
}
